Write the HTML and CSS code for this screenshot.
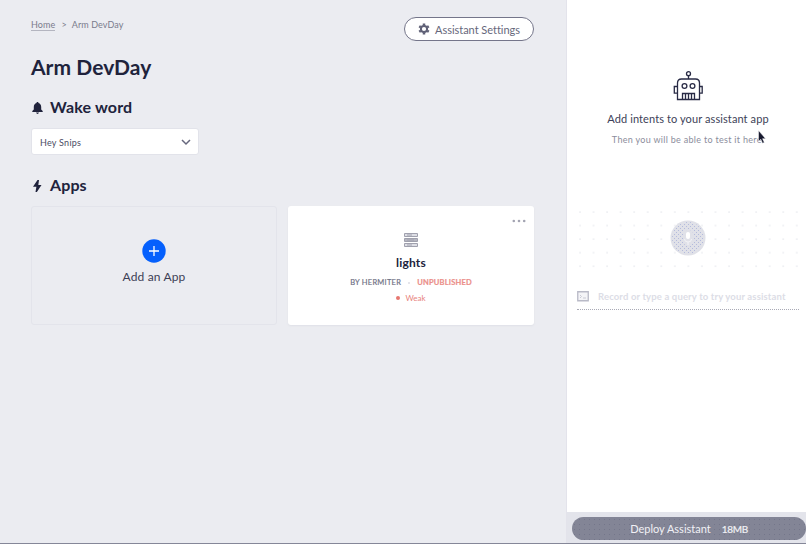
FILE: index.html
```html
<!DOCTYPE html>
<html lang="en">
<head>
<meta charset="utf-8">
<title>Arm DevDay</title>
<link rel="stylesheet" href="styles.css">
</head>
<body>
<div class="shell">
  <main class="main">
    <header class="top">
      <nav class="crumbs"><a class="home">Home</a><span class="sep">&gt;</span><span class="here">Arm DevDay</span></nav>
      <button class="settings">
        <svg width="12" height="12" viewBox="0 0 12 12"><g fill="none" stroke="#5f6076"><circle cx="6" cy="6" r="3.1" stroke-width="2"/><path d="M6 .4v2M6 9.600v2M1.200 3.200l1.500.9M9.300 7.900l1.500.9M1.200 8.800l1.500-.9M9.300 4.100l1.500-.9" stroke-width="2.500"/></g></svg>
        <span>Assistant Settings</span>
      </button>
    </header>
    <h1>Arm DevDay</h1>
    <h2 class="wake"><svg width="12" height="12" viewBox="0 0 12 12"><path fill="#20233c" d="M6.500 0c.7 0 1 .4 1 1 1.700.5 2.700 1.900 2.700 4v2.500L11.700 9v1H1.300V9l1.500-1.500V5c0-2.100 1-3.500 2.700-4 0-.6.3-1 1-1zM5 10.600h3Q7.500 12 6.500 12T5 10.600z"/></svg><span>Wake word</span></h2>
    <div class="select"><span>Hey Snips</span><svg width="10" height="7" viewBox="0 0 10 7"><path d="M1 1l4 4 4-4" fill="none" stroke="#66677d" stroke-width="1.500"/></svg></div>
    <h2 class="appshead"><svg width="12" height="12" viewBox="0 0 12 12"><path fill="#20233c" d="M6.500 0L2 6.800h3.400L4.500 12h1.400L10.500 5H7.300L8 0z"/></svg><span>Apps</span></h2>
    <section class="cards">
      <div class="card add">
        <svg width="24" height="24" viewBox="0 0 24 24"><circle cx="12" cy="12" r="11.700" fill="#0560fd"/><path d="M12 7v10M7 12h10" stroke="#fff" stroke-width="1.300"/></svg>
        <span>Add an App</span>
      </div>
      <div class="card app">
        <svg class="more" width="14" height="4" viewBox="0 0 14 4"><g fill="#a3a4b2"><circle cx="1.800" cy="2" r="1.300"/><circle cx="7" cy="2" r="1.300"/><circle cx="12.200" cy="2" r="1.300"/></g></svg>
        <svg width="16" height="16" viewBox="0 0 16 16"><g stroke="#a0a1ae"><path fill="#dddee5" d="M1.500 1.500h13v3h-13zM1.500 11.500h13v3h-13z"/><path fill="#b4b5c0" d="M1.500 6.500h13v3h-13z"/><path fill="none" d="M4 3h5M4 8h7M4 13h5"/></g></svg>
        <h3>lights</h3>
        <p class="meta"><span class="by">BY HERMITER</span><i class="dot"></i><span class="unpub">UNPUBLISHED</span></p>
        <p class="weak"><i></i><span>Weak</span></p>
      </div>
    </section>
  </main>
  <aside class="side">
    <div class="intro">
      <svg width="30" height="30" viewBox="0 0 30 30"><g fill="none" stroke="#292b45" stroke-width="1.300"><circle cx="15.500" cy="2.700" r="2"/><path d="M15.500 5v3M4.500 28.500V12q0-4 4-4h14q4 0 4 4v16.500zM4.500 15.500H1.300v6.700h3.200M26.500 15.500h2.700v6.700h-2.700"/><circle cx="11.500" cy="15" r="2.400"/><circle cx="19.500" cy="15" r="2.400"/><path d="M9.500 28v-5.500h12V28M12.500 22v6M15.500 22v6M18.500 22v6"/></g></svg>
      <p class="lead">Add intents to your assistant app</p>
      <p class="sub">Then you will be able to test it here.</p>
      <svg class="cursor" width="8" height="14" viewBox="0 0 8 14"><path fill="#191b30" stroke="#fff" stroke-width=".5" d="M.5.5v10.800l2.300-2 1.700 3.900 1.800-.8-1.700-3.700h3z"/></svg>
    </div>
    <div class="recorder">
      <svg class="dots" width="228" height="64"><defs><pattern id="grid" width="13.550" height="13.550" patternUnits="userSpaceOnUse"><circle cx="2" cy="2" r=".9" fill="#e9eaef"/></pattern><pattern id="mesh" width="4" height="4" patternUnits="userSpaceOnUse"><path d="M0 0h1v1H0zM2 2h1v1H2z" fill="#b4bbdc" shape-rendering="crispEdges"/></pattern></defs><rect width="228" height="64" fill="url(#grid)"/><circle cx="110" cy="28" r="17.500" fill="#e0e1e8"/><circle cx="110" cy="28" r="16" fill="url(#mesh)"/><rect x="105" y="20" width="10" height="15" rx="4" fill="#e0e1e8"/><rect x="108" y="22" width="4" height="7" rx="2" fill="#fff"/><path d="M106.500 29q0 3 3.500 3t3.500-3M110 32v3" fill="none" stroke="#f3f3f7"/></svg>
    </div>
    <div class="query">
      <svg width="12" height="11" viewBox="0 0 12 11"><path d="M.75.75h10.500v9H.75z" fill="#f4f4f7" stroke="#b9bac7" stroke-width="1.300"/><path d="M3 4l1.500 1.500L3 7M6 7h3" fill="none" stroke="#c9cad4"/></svg>
      <span>Record or type a query to try your assistant</span>
    </div>
    <footer class="foot"><button class="deploy"><span class="dname">Deploy Assistant</span><span class="size">18MB</span></button></footer>
  </aside>
</div>
</body>
</html>
```
FILE: styles.css
```css
* { box-sizing: border-box; }
body { margin: 0; font-family: Lato, sans-serif; color: #20233c; }
h1, h2, h3, p { margin: 0; }
svg { display: block; flex: none; }
span { white-space: nowrap; }
button { font-family: inherit; cursor: pointer; }
.shell { display: flex; width: 806px; height: 544px; border-bottom: 1px solid #858798; overflow: hidden; }
.main { width: 567px; padding: 17px 32px 0 31px; background: #ebecf1; border-right: 1px solid #e3e3eb; }
.top { display: flex; justify-content: space-between; height: 24px; }
.crumbs { display: flex; padding-top: 1px; font-size: 9px; line-height: 13px; letter-spacing: .1px; color: #7a7b8c; }
.home { height: 13px; border-bottom: 1px solid #b4b5c0; }
.sep { margin: 0 5px 0 6px; }
.settings { display: flex; align-items: center; justify-content: center; gap: 5px; width: 130px; height: 24px; padding: 0; border: 1px solid #74758a; border-radius: 12px; background: #fff; color: #66677b; font-size: 11px; letter-spacing: -.03px; }
h1 { margin-top: 12px; font-size: 21px; line-height: 28px; letter-spacing: .05px; }
h2 { display: flex; align-items: center; gap: 7px; font-size: 16px; line-height: 20px; letter-spacing: .15px; }
.wake { margin-top: 16px; }
.wake svg, .appshead svg { margin-top: 2px; }
.select { display: flex; align-items: center; justify-content: space-between; width: 168px; height: 27px; margin-top: 11px; padding: 1px 7px 0 8px; border: 1px solid #e2e3ea; border-radius: 3px; background: #fff; font-size: 9px; letter-spacing: .25px; color: #4b4c64; }
.appshead { margin-top: 20px; letter-spacing: .1px; }
.cards { display: grid; grid-template-columns: 246px 246px; gap: 11px; margin-top: 11px; }
.card { display: flex; flex-direction: column; align-items: center; height: 119px; border-radius: 3px; }
.add { padding-top: 32px; border: 1px solid #e3e4eb; font-size: 12px; line-height: 15px; letter-spacing: .15px; }
.add span { margin-top: 6px; color: #3d3e56; }
.app { position: relative; padding-top: 26px; background: #fff; box-shadow: 0 1px 2px #dfe0e7; }
.more { position: absolute; top: 13px; right: 8px; }
h3 { margin-top: 6px; font-size: 12px; line-height: 17px; letter-spacing: .2px; }
.meta { display: flex; align-items: center; margin-top: 6px; font-size: 7.500px; line-height: 11px; color: #6d6e82; }
.by { letter-spacing: .25px; -webkit-text-stroke: .15px; }
.dot { width: 2px; height: 2px; margin: 0 7px; border-radius: 50%; background: #dcdde5; }
.unpub { color: #eb8f8a; font-weight: 700; letter-spacing: .2px; -webkit-text-stroke: .2px; }
.weak { display: flex; align-items: center; gap: 5px; margin-top: 4px; font-size: 8px; line-height: 12px; color: #e8837d; }
.weak i { width: 4px; height: 4px; border-radius: 50%; background: #e77770; }
.side { display: flex; flex-direction: column; width: 239px; background: #fff; }
.intro { position: relative; display: flex; flex-direction: column; align-items: center; height: 209px; padding: 71px 0 0 3px; }
.lead { margin-top: 10px; font-size: 11px; line-height: 16px; letter-spacing: .1px; color: #3d3f58; }
.sub { margin-top: 5px; font-size: 9px; line-height: 15px; letter-spacing: .3px; color: #8c8d9c; }
.cursor { position: absolute; left: 191px; top: 130px; }
.recorder { height: 79px; padding-left: 11px; }
.recorder svg { margin-top: 1px; }
.query { display: flex; align-items: center; gap: 9px; height: 22px; margin: 0 7px 0 10px; padding-bottom: 4px; border-bottom: 1px dotted #a9aab6; font-size: 9.500px; letter-spacing: .14px; color: #dcdde6; font-weight: 700; }
.foot { margin-top: auto; height: 31px; padding: 5px 0 0 5px; background: #e3e4eb; }
.deploy { display: flex; align-items: center; justify-content: center; gap: 11px; width: 234px; height: 23px; padding: 0; border: 0; border-radius: 12px; background: radial-gradient(circle, #74768a .6px, transparent .7px) 0 0 / 5px 5px #838596; color: #f1f1f5; font-size: 11px; letter-spacing: 0; }
.size { font-size: 10px; letter-spacing: -.3px; -webkit-text-stroke: .2px; }
```
